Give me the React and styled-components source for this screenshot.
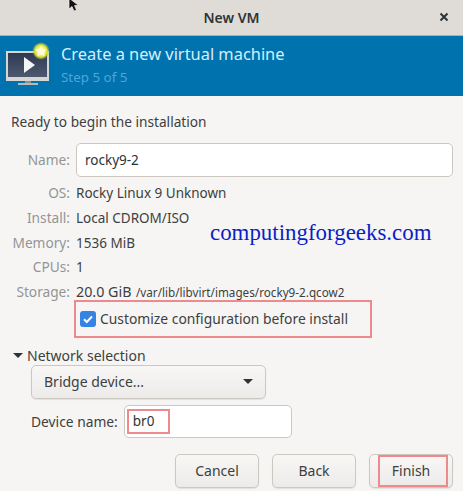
import React from 'react';
import styled, { createGlobalStyle } from 'styled-components';

const GlobalStyle = createGlobalStyle`
  html, body { margin: 0; padding: 0; background: #f6f5f4; }
  body { font-family: "Noto Sans", "Open Sans", sans-serif; color: #2e3436; }
  * { box-sizing: border-box; }
`;

const Win = styled.div`
  position: relative;
  width: 463px;
  height: 491px;
  overflow: hidden;
  background: #f6f5f4;
`;

const TitleBar = styled.header`
  position: relative;
  height: 36px;
  display: flex;
  align-items: center;
  justify-content: center;
  padding-top: 0;
  background: #dfdcd8;
  border-bottom: 1px solid #b3afa9;
  font-size: 14px;
  font-weight: 600;
  color: #2e3436;
`;

const CloseBtn = styled.span`
  position: absolute;
  right: 12px;
  top: 10px;
  width: 14px;
  height: 14px;
  display: flex;
`;

const Banner = styled.div`
  height: 60px;
  display: flex;
  background: #0073ae;
  padding: 6px 0 0 5px;
  gap: 10px;
`;

const BannerText = styled.div`
  display: flex;
  flex-direction: column;
`;

const BannerTitle = styled.div`
  font-size: 16.4px;
  line-height: 22px;
  margin-top: 1px;
  color: #d5effb;
`;

const BannerSub = styled.div`
  font-size: 13.4px;
  line-height: 22px;
  margin-top: 1px;
  color: #4ba6dc;
`;

const Body = styled.div`
  padding: 16px 10px 0 11px;
  font-size: 14px;
`;

const Heading = styled.div`
  font-size: 13.7px;
  line-height: 20px;
  color: #3d3f40;
`;

const Summary = styled.div`
  display: grid;
  grid-template-columns: 59px 1fr;
  column-gap: 6px;
  align-items: center;
  margin-top: 11px;
`;

const Label = styled.div`
  text-align: right;
  color: #929595;
  font-size: 13.7px;
  line-height: 24.8px;
  white-space: nowrap;
`;

const Value = styled.div`
  font-size: 13.5px;
  line-height: 24.8px;
  color: #3d3f40;
  white-space: nowrap;
`;

const LargeSize = styled.span`
  font-size: 14.3px;
`;

const SmallPath = styled.span`
  font-size: 11.7px;
  margin-left: 1px;
`;

const TextInput = styled.div`
  position: relative;
  width: ${p => p.$width}px;
  height: ${p => p.$height}px;
  display: flex;
  align-items: center;
  padding-left: 8px;
  background: #fff;
  border: 1px solid #cdc7c2;
  border-radius: 5px;
  font-size: 13.5px;
  color: #2e3436;
`;

const NameRow = styled.div`
  grid-column: 1 / -1;
  display: grid;
  grid-template-columns: 59px 1fr;
  column-gap: 6px;
  align-items: center;
  margin-bottom: 4px;
`;

const CustomizeBox = styled.div`
  height: 38px;
  width: 298px;
  margin: -5px 0 0 63px;
  display: flex;
  align-items: center;
  gap: 4px;
  padding-left: 4px;
  border: 2px solid #ee8a8c;
  font-size: 13.85px;
  color: #3d3f40;
`;

const Check = styled.span`
  width: 16px;
  height: 16px;
  display: flex;
  align-items: center;
  justify-content: center;
  border-radius: 3px;
  background: #3584e4;
`;

const Expander = styled.div`
  display: flex;
  align-items: center;
  gap: 4px;
  margin: 8px 0 0 2px;
  line-height: 20px;
  color: #3d3f40;
`;

const Arrow = styled.span`
  width: 0;
  height: 0;
  border-left: 5.5px solid transparent;
  border-right: 5.5px solid transparent;
  border-top: 5.5px solid #2e3436;
`;

const Network = styled.div`
  padding-left: 20px;
  margin-top: -1px;
`;

const Combo = styled.div`
  width: 235px;
  height: 34px;
  display: flex;
  align-items: center;
  justify-content: space-between;
  padding: 0 12px;
  border: 1px solid #cdc7c2;
  border-radius: 5px;
  background: linear-gradient(#f8f7f6, #edebe9);
  box-shadow: 0 1px 1px rgba(0, 0, 0, 0.08);
  color: #3d3f40;
`;

const DeviceRow = styled.div`
  display: flex;
  align-items: center;
  gap: 6px;
  margin-top: 6px;
  font-size: 13.8px;
  color: #3d3f40;
`;

const Br0Box = styled.span`
  position: absolute;
  left: 2px;
  top: 3px;
  width: 43px;
  height: 25px;
  border: 2px solid #ee8a8c;
`;

const Actions = styled.div`
  display: flex;
  justify-content: flex-end;
  gap: 13px;
  margin-top: 16px;
`;

const Button = styled.div`
  position: relative;
  width: 84px;
  height: 34px;
  display: flex;
  align-items: center;
  justify-content: center;
  border: 1px solid #cdc7c2;
  border-radius: 5px;
  background: linear-gradient(#f8f7f6, #edebe9);
  box-shadow: 0 1px 1px rgba(0, 0, 0, 0.08);
  color: #3d3f40;
`;

const FinishBox = styled.span`
  position: absolute;
  left: 8px;
  top: 0;
  width: 70px;
  height: 32px;
  border: 2px solid #ee8a8c;
`;

const Watermark = styled.div`
  position: absolute;
  left: 210px;
  top: 219px;
  font-family: "Liberation Serif", serif;
  font-size: 22.9px;
  line-height: 28px;
  color: #0a1fc4;
  white-space: nowrap;
`;

const Cursor = styled.svg`
  position: absolute;
  left: 68px;
  top: -2px;
`;

function VmIcon() {
  return (
    <svg width="46" height="44" viewBox="0 0 46 44">
      <defs>
        <radialGradient id="glow">
          <stop offset="0.35" stopColor="#fffb9a" />
          <stop offset="0.7" stopColor="#d8dc30" />
          <stop offset="1" stopColor="#9fb83a" stopOpacity="0" />
        </radialGradient>
        <linearGradient id="screen" x1="0" y1="0" x2="0" y2="1">
          <stop offset="0" stopColor="#2f3a52" />
          <stop offset="1" stopColor="#4d5970" />
        </linearGradient>
      </defs>
      <rect x="1" y="9" width="43" height="30" fill="#d6d6d4" />
      <rect x="3" y="11" width="39" height="24" fill="url(#screen)" />
      <path d="M19 15l11 8-11 8z" fill="#f4f4f4" />
      <rect x="20" y="39" width="6" height="2" fill="#8e8e8c" />
      <rect x="13" y="41" width="20" height="2" fill="#b8b8b6" />
      <circle cx="36" cy="9" r="9" fill="url(#glow)" />
      <path d="M36 3.5l1.7 3.6 3.9.5-2.9 2.7.8 3.9-3.5-2-3.5 2 .8-3.9-2.9-2.7 3.9-.5z" fill="#fffde0" />
    </svg>
  );
}

export default function App() {
  return (
    <Win>
      <GlobalStyle />
      <TitleBar>
        New VM
        <CloseBtn>
          <svg width="14" height="14" viewBox="0 0 14 14">
            <path d="M3.5 3.5l7 7M10.500 3.5l-7 7" stroke="#2e3436" strokeWidth="2" />
          </svg>
        </CloseBtn>
      </TitleBar>
      <Banner>
        <VmIcon />
        <BannerText>
          <BannerTitle>Create a new virtual machine</BannerTitle>
          <BannerSub>Step 5 of 5</BannerSub>
        </BannerText>
      </Banner>
      <Body>
        <Heading>Ready to begin the installation</Heading>
        <Summary>
          <NameRow>
            <Label>Name:</Label>
            <TextInput $width={377} $height={34}>rocky9-2</TextInput>
          </NameRow>
          <Label>OS:</Label>
          <Value>Rocky Linux 9 Unknown</Value>
          <Label>Install:</Label>
          <Value>Local CDROM/ISO</Value>
          <Label>Memory:</Label>
          <Value>1536 MiB</Value>
          <Label>CPUs:</Label>
          <Value>1</Value>
          <Label>Storage:</Label>
          <Value>
            <LargeSize>20.0 GiB</LargeSize> <SmallPath>/var/lib/libvirt/images/rocky9-2.qcow2</SmallPath>
          </Value>
        </Summary>
        <CustomizeBox>
          <Check>
            <svg width="12" height="12" viewBox="0 0 12 12">
              <path d="M2 6.2l2.800 2.800L10 3.500" fill="none" stroke="#fff" strokeWidth="2" />
            </svg>
          </Check>
          Customize configuration before install
        </CustomizeBox>
        <Expander>
          <Arrow />
          Network selection
        </Expander>
        <Network>
          <Combo>
            Bridge device...
            <Arrow />
          </Combo>
          <DeviceRow>
            Device name:
            <TextInput $width={168} $height={33}>
              br0
              <Br0Box />
            </TextInput>
          </DeviceRow>
        </Network>
        <Actions>
          <Button>Cancel</Button>
          <Button>Back</Button>
          <Button>
            Finish
            <FinishBox />
          </Button>
        </Actions>
      </Body>
      <Watermark>computingforgeeks.com</Watermark>
      <Cursor width="12" height="14" viewBox="0 0 12 14">
        <path d="M1 0v11l3-2.500 2 4.500 2.500-1-2-4.500h4z" fill="#111" stroke="#eee" strokeWidth="0.7" />
      </Cursor>
    </Win>
  );
}
